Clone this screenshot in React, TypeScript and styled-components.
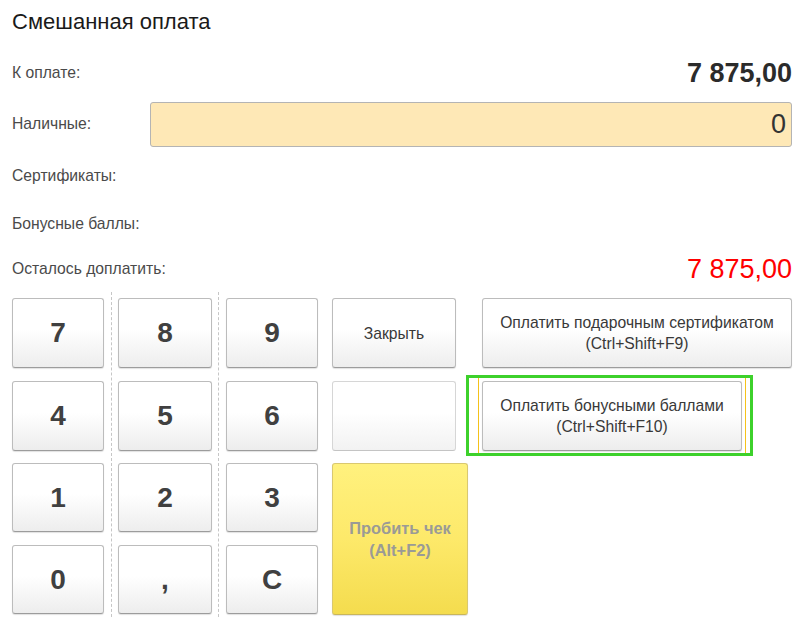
import React from 'react'
import styled, { createGlobalStyle } from 'styled-components'

const GlobalStyle = createGlobalStyle`
  html, body {
    margin: 0;
    padding: 0;
    background: #ffffff;
  }
  body {
    font-family: "Liberation Sans", Arial, sans-serif;
  }
`

const Page = styled.div`
  width: 805px;
  height: 617px;
  padding: 0 13px 0 12px;
  box-sizing: border-box;
  overflow: hidden;
  background: #ffffff;
`

const Title = styled.h1`
  margin: 0;
  height: 48px;
  padding-top: 10px;
  box-sizing: border-box;
  font-size: 22px;
  line-height: 24px;
  font-weight: normal;
  color: #1a1a1a;
`

const Row = styled.div<{ $h: number }>`
  display: flex;
  align-items: center;
  justify-content: space-between;
  height: ${(p) => p.$h}px;
`

const Label = styled.span<{ $auto?: boolean }>`
  width: ${(p) => (p.$auto ? 'auto' : '138px')};
  flex-shrink: 0;
  font-size: 15.7px;
  color: #4a4a4a;
`

const Amount = styled.span<{ $red?: boolean }>`
  font-size: 27px;
  font-weight: ${(p) => (p.$red ? 'normal' : 'bold')};
  color: ${(p) => (p.$red ? '#ff0000' : '#2b2b2b')};
`

const CashInput = styled.input`
  flex: 1;
  height: 45px;
  box-sizing: border-box;
  border: 1px solid #b4b4b4;
  border-radius: 3px;
  background: #fee8b6;
  text-align: right;
  padding: 0 5px 0 8px;
  font-family: "Liberation Sans", Arial, sans-serif;
  font-size: 27px;
  color: #333333;
  outline: none;
`

const Pad = styled.div`
  display: flex;
`

const KeyColumn = styled.div<{ $sep?: boolean; $pl: number; $pr: number }>`
  display: flex;
  flex-direction: column;
  gap: 13px;
  padding: 6px ${(p) => p.$pr}px 0 ${(p) => p.$pl}px;
  border-right: ${(p) => (p.$sep ? '1px dashed #c6c6c6' : 'none')};
  height: 330px;
  box-sizing: border-box;
`

const SideColumn = styled.div<{ $w: number; $ml: number }>`
  display: flex;
  flex-direction: column;
  align-items: flex-start;
  gap: 13px;
  padding-top: 6px;
  width: ${(p) => p.$w}px;
  margin-left: ${(p) => p.$ml}px;
`

const Button = styled.button<{ $w: number; $h: number }>`
  width: ${(p) => p.$w}px;
  height: ${(p) => p.$h}px;
  flex-shrink: 0;
  box-sizing: border-box;
  border: 1px solid #bcbcbc;
  border-bottom-color: #9c9c9c;
  border-radius: 3px;
  background: linear-gradient(#ffffff 0%, #ffffff 45%, #ededed 100%);
  box-shadow: 0 1px 1px rgba(0, 0, 0, 0.12);
  font-family: "Liberation Sans", Arial, sans-serif;
  color: #3a3a3a;
  cursor: pointer;
  padding: 0;
`

const DigitButton = styled(Button)`
  font-size: 28px;
  font-weight: bold;
  color: #404040;
`

const ActionButton = styled(Button)`
  font-size: 15.7px;
  line-height: 21px;
  color: #383838;
`

const BlankButton = styled(Button)`
  border-color: #d6d6d6;
  border-bottom-color: #c4c4c4;
  background: linear-gradient(#ffffff 0%, #ffffff 45%, #f2f2f2 100%);
  box-shadow: none;
`

const PrintButton = styled(Button)`
  border-color: #d9c870;
  border-bottom-color: #c9b65a;
  background: linear-gradient(#fff17e 0%, #fde96a 50%, #f4dc4e 100%);
  font-size: 16.4px;
  font-weight: bold;
  line-height: 22px;
  color: #9a9a96;
`

const Highlighted = styled.div`
  position: relative;
`

const GreenFrame = styled.div`
  position: absolute;
  left: -16px;
  right: -11px;
  top: -6px;
  bottom: -5px;
  border: 3px solid #3dd12b;
  pointer-events: none;
`

const YellowMarks = styled.div`
  position: absolute;
  left: -4px;
  right: -4px;
  top: -3px;
  bottom: -2px;
  border-left: 1px solid #f5c21a;
  border-right: 1px solid #f5c21a;
  pointer-events: none;
`

const keys = [
  ['7', '4', '1', '0'],
  ['8', '5', '2', ','],
  ['9', '6', '3', 'C'],
]
const keyHeights = [70, 70, 69, 69]
const columnSpec = [
  { w: 92, pl: 0, pr: 7, sep: true },
  { w: 94, pl: 6, pr: 6, sep: true },
  { w: 92, pl: 7, pr: 0, sep: false },
]

export default function App() {
  return (
    <Page>
      <GlobalStyle />
      <Title>Смешанная оплата</Title>

      <Row $h={50}>
        <Label>К оплате:</Label>
        <Amount>7 875,00</Amount>
      </Row>
      <Row $h={52}>
        <Label>Наличные:</Label>
        <CashInput readOnly value="0" />
      </Row>
      <Row $h={52}>
        <Label>Сертификаты:</Label>
      </Row>
      <Row $h={44}>
        <Label>Бонусные баллы:</Label>
      </Row>
      <Row $h={46}>
        <Label $auto>Осталось доплатить:</Label>
        <Amount $red>7 875,00</Amount>
      </Row>

      <Pad>
        {keys.map((col, ci) => (
          <KeyColumn
            key={ci}
            $sep={columnSpec[ci].sep}
            $pl={columnSpec[ci].pl}
            $pr={columnSpec[ci].pr}
          >
            {col.map((k, ri) => (
              <DigitButton
                key={k}
                $w={columnSpec[ci].w}
                $h={keyHeights[ri]}
                style={ri === 2 ? { marginTop: -1 } : undefined}
              >
                {k}
              </DigitButton>
            ))}
          </KeyColumn>
        ))}

        <SideColumn $w={136} $ml={14}>
          <ActionButton $w={124} $h={70}>Закрыть</ActionButton>
          <BlankButton $w={124} $h={70} />
          <PrintButton $w={136} $h={152} style={{ marginTop: -1 }}>
            Пробить чек
            <br />
            (Alt+F2)
          </PrintButton>
        </SideColumn>

        <SideColumn $w={310} $ml={14}>
          <ActionButton $w={310} $h={70}>
            Оплатить подарочным сертификатом
            <br />
            (Ctrl+Shift+F9)
          </ActionButton>
          <Highlighted>
            <ActionButton $w={260} $h={70}>
              Оплатить бонусными баллами
              <br />
              (Ctrl+Shift+F10)
            </ActionButton>
            <GreenFrame />
            <YellowMarks />
          </Highlighted>
        </SideColumn>
      </Pad>
    </Page>
  )
}
